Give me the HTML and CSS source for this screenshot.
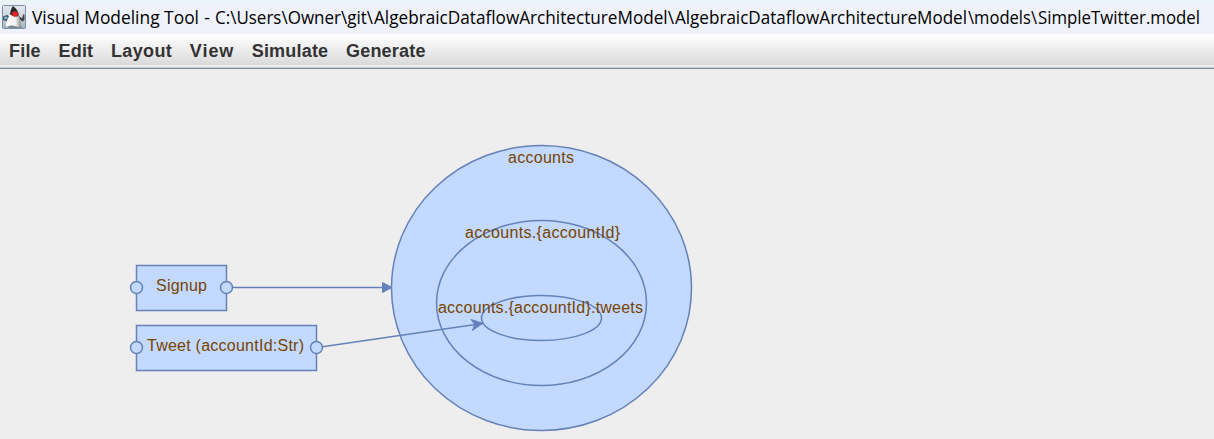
FILE: index.html
```html
<!DOCTYPE html>
<html lang="en">
<head>
<meta charset="utf-8">
<title>Visual Modeling Tool</title>
<link rel="stylesheet" href="styles.css">
</head>
<body>
<header class="titlebar">
  <svg class="app-icon" width="24" height="24" viewBox="0 0 24 24">
    <defs>
      <linearGradient id="tile" x1="0" y1="0" x2="0" y2="1"><stop offset="0" stop-color="#e4e8ed"/><stop offset=".5" stop-color="#ccd4dc"/><stop offset="1" stop-color="#a4b2bf"/></linearGradient>
      <linearGradient id="belly" x1="0" y1="0" x2="1" y2="0"><stop offset="0" stop-color="#fff"/><stop offset=".65" stop-color="#f0f0f0"/><stop offset="1" stop-color="#8e8e8e"/></linearGradient>
    </defs>
    <rect x=".5" y=".5" width="23" height="23" rx="1" fill="url(#tile)" stroke="#7891a8"/>
    <path d="M1 11.500l4-1.500 3 2v3l-4 1-3-1z" fill="#3d4146"/>
    <path d="M1.500 12l3.500-.8 1 2.300-3.500 1.200z" fill="#75b6e6"/>
    <path d="M17 11l3 2.500 1.500-4.500 1 1v5l-2 1.500-4-3z" fill="#3d4146"/>
    <path d="M5 21.500h15l-1 1H7z" fill="#555b61"/>
    <path d="M8.500 8C7 11 6 13 5 15.500c-1 2.500-1.500 5-.5 6 2 .5 3-1.500 5-1.500 3 0 5 3 9 1.500 1-4-.5-7-1.700-11.500z" fill="url(#belly)"/>
    <path d="M11 1C9.300 3 8.300 6 8 9.500l3 1.500 5 .5.800-2C16 6.500 14.500 3.500 11 1z" fill="#292a2d"/>
    <ellipse cx="13" cy="9" rx="3" ry="2.700" fill="#e32222"/>
  </svg>
  <h1 class="title"><svg width="1176" height="30">
    <text y="22"><tspan x="0" textLength="167" lengthAdjust="spacingAndGlyphs">Visual Modeling Tool</tspan><tspan x="172" textLength="6" lengthAdjust="spacingAndGlyphs">-</tspan><tspan x="183" textLength="158" lengthAdjust="spacingAndGlyphs">C:\Users\Owner\git\</tspan><tspan x="342" textLength="300" lengthAdjust="spacingAndGlyphs">AlgebraicDataflowArchitectureModel\</tspan><tspan x="643" textLength="292" lengthAdjust="spacingAndGlyphs">AlgebraicDataflowArchitectureModel</tspan><tspan x="936" textLength="69" lengthAdjust="spacingAndGlyphs">\models\</tspan><tspan x="1006" textLength="162" lengthAdjust="spacingAndGlyphs">SimpleTwitter.model</tspan></text>
  </svg></h1>
</header>
<nav class="menubar">
  <span>File</span><span>Edit</span><span class="wide">Layout</span><span class="wider">View</span><span>Simulate</span><span>Generate</span>
</nav>
<main class="canvas">
  <svg class="graph" width="1214" height="370" viewBox="0 69 1214 370">
    <g class="shape">
      <ellipse cx="541.5" cy="288" rx="150" ry="142.5"/>
      <ellipse cx="541.5" cy="303" rx="105" ry="82.5"/>
      <ellipse cx="541.5" cy="318" rx="60" ry="22.5"/>
      <rect x="136.5" y="265.5" width="90" height="45"/>
      <rect x="136.5" y="325.5" width="180" height="45"/>
      <circle cx="136.5" cy="287.5" r="6"/>
      <circle cx="226.5" cy="287.5" r="6"/>
      <circle cx="136.5" cy="347.5" r="6"/>
      <circle cx="316.5" cy="347.5" r="6"/>
      <path d="M232.5 287.5H384M322.5 346.700L477 324.200"/>
    </g>
    <path class="arrow" d="M392 287.500l-9.500-5v10z"/>
    <path class="arrow" d="M483 323.300l-12-3.800 3.800 5-2.500 6z"/>
    <g class="label">
      <text x="508" y="163" textLength="66">accounts</text>
      <text x="465" y="238" textLength="155">accounts.{accountId}</text>
      <text x="438" y="313" textLength="205">accounts.{accountId}.tweets</text>
      <text x="156" y="291" textLength="51">Signup</text>
      <text x="147" y="351" textLength="157">Tweet (accountId:Str)</text>
    </g>
  </svg>
</main>
</body>
</html>
```
FILE: styles.css
```css
body {
  margin: 0;
  height: 439px;
  display: flex;
  flex-direction: column;
  overflow: hidden;
  background: #eee;
}
.titlebar {
  height: 34px;
  display: flex;
  align-items: flex-start;
  padding-left: 2px;
  box-sizing: border-box;
  background: linear-gradient(#e6f6f6, #eff2fa 4px);
}
.app-icon { margin-top: 5px; }
.title {
  margin: 2px 0 0 6px;
  font: 18px "Open Sans", "Noto Sans", sans-serif;
}
.title svg { display: block; overflow: visible; }
.menubar {
  height: 35px;
  box-sizing: border-box;
  display: flex;
  gap: 17.7px;
  padding: 0 9px;
  font: bold 18px/34px "Liberation Sans", Arial, sans-serif;
  font-kerning: none;
  letter-spacing: 0.2px;
  color: #333;
  background: linear-gradient(#fff, #dadada 31px, #eee 31px, #eee 33px, #ccc 33px);
  border-bottom: 1px solid #7a8a99;
}
.wide { letter-spacing: 0.35px; }
.wider { letter-spacing: 0.8px; }
.canvas { flex: 1; }
.graph { display: block; }
.shape { fill: #c3d9ff; stroke: #6482b9; stroke-width: 1.5; }
.arrow { fill: #6482b9; stroke: #6482b9; }
.label {
  font: 16px "Liberation Sans", Arial, sans-serif;
  fill: #774400;
}
```
